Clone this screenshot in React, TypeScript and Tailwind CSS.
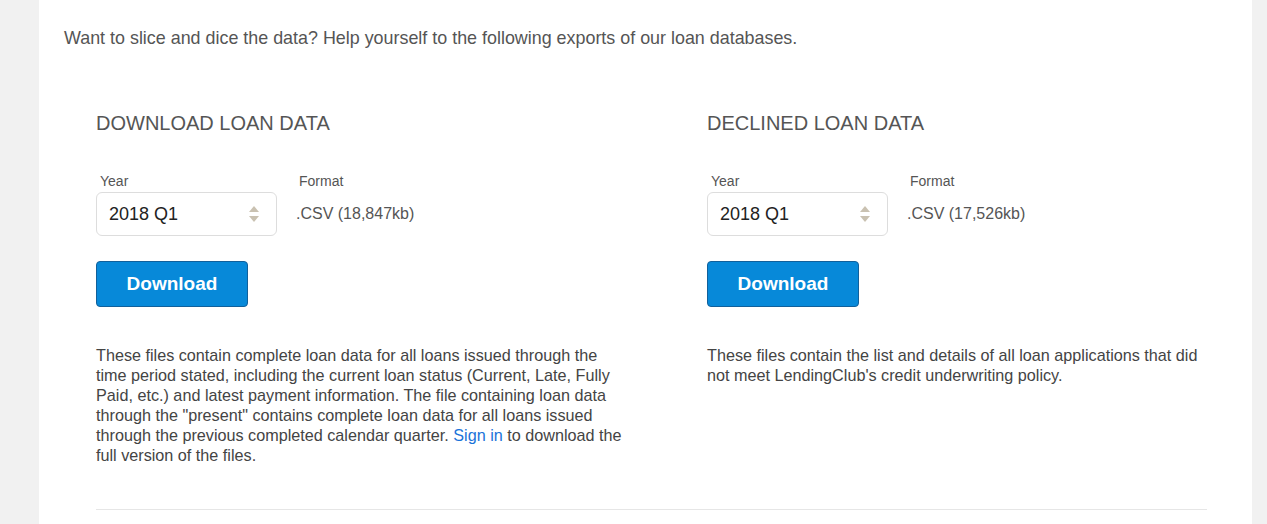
import React from "react";

function Arrows() {
  return (
    <svg width="12" height="18" viewBox="0 0 12 18" className="shrink-0">
      <polygon points="6,1 11,7 1,7" fill="#c9c1b1" />
      <polygon points="1,11 11,11 6,17" fill="#c9c1b1" />
    </svg>
  );
}

function Column({
  title,
  size,
  children,
  pw,
}: {
  title: string;
  size: string;
  children: React.ReactNode;
  pw: string;
}) {
  return (
    <div className="flex flex-col">
      <h2 className="text-[20px] leading-[24px] text-[#555] font-normal">{title}</h2>
      <div className="mt-[37px] flex">
        <div className="flex flex-col">
          <div className="pl-[4px] text-[14px] leading-[18px] text-[#555]">Year</div>
          <div className="mt-[2px] w-[181px] h-[44px] border border-[#ddd] rounded-[6px] bg-white flex items-center justify-between pl-[12px] pr-[16px]">
            <span className="text-[18px] text-[#222]">2018 Q1</span>
            <Arrows />
          </div>
        </div>
        <div className="ml-[21px] flex flex-col">
          <div className="pl-[1px] text-[14px] leading-[18px] text-[#555]">Format</div>
          <div className="mt-[2px] h-[44px] flex items-center text-[16px] text-[#555] -ml-[2px]">
            {size}
          </div>
        </div>
      </div>
      <button className="mt-[25px] w-[152px] h-[46px] rounded-[4px] bg-[#0789d9] border border-[#11609b] text-white text-[19px] font-bold flex items-center justify-center">
        Download
      </button>
      <p className={`mt-[38px] text-[16.2px] leading-[20px] text-[#444] ${pw}`}>{children}</p>
    </div>
  );
}

export default function App() {
  return (
    <div
      className="w-[1267px] h-[524px] bg-[#f1f1f1] overflow-hidden"
      style={{ fontFamily: '"Liberation Sans", Arial, sans-serif' }}
    >
      <div className="ml-[39px] w-[1213px] h-full bg-white pl-[25px] pt-[26px]">
        <p className="text-[17.9px] leading-[24px] text-[#555]">
          Want to slice and dice the data? Help yourself to the following exports of our loan databases.
        </p>
        <div className="ml-[32px] mt-[61px] w-[1111px]">
          <div className="grid grid-cols-[611px_500px]">
            <Column title="DOWNLOAD LOAN DATA" size=".CSV (18,847kb)" pw="w-[535px]">
              These files contain complete loan data for all loans issued through the time period
              stated, including the current loan status (Current, Late, Fully Paid, etc.) and latest
              payment information. The file containing loan data through the "present" contains
              complete loan data for all loans issued through the previous completed calendar
              quarter. <span className="text-[#1a73d9]">Sign in</span> to download the full version
              of the files.
            </Column>
            <Column title="DECLINED LOAN DATA" size=".CSV (17,526kb)" pw="w-[500px]">
              These files contain the list and details of all loan applications that did not meet
              LendingClub's credit underwriting policy.
            </Column>
          </div>
          <div className="mt-[44px] h-px bg-[#e6e6e6]" />
        </div>
      </div>
    </div>
  );
}
